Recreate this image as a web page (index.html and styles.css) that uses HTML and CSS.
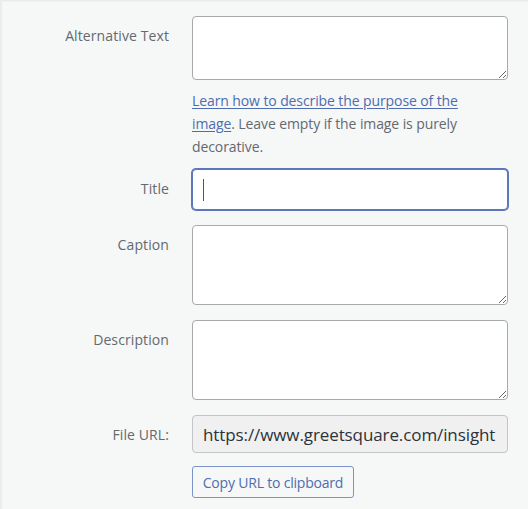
FILE: index.html
```html
<!DOCTYPE html>
<html lang="en">
<head>
<meta charset="utf-8">
<title>Attachment details</title>
<link rel="stylesheet" href="styles.css">
</head>
<body>
<div class="panel">
  <form class="details">
    <label class="label label-alt" for="alt">Alternative Text</label>
    <div class="field">
      <textarea id="alt" class="area area-alt"></textarea>
      <p class="help"><a href="#" class="help-link">Learn how to describe the purpose of the image</a>. Leave empty if the image is purely decorative.</p>
    </div>

    <label class="label label-title" for="title">Title</label>
    <div class="field">
      <div class="focus-wrap">
        <input id="title" class="text focused" type="text" value="">
        <span class="caret"></span>
      </div>
    </div>

    <label class="label" for="caption">Caption</label>
    <div class="field">
      <textarea id="caption" class="area area-tall"></textarea>
    </div>

    <label class="label" for="desc">Description</label>
    <div class="field">
      <textarea id="desc" class="area area-tall"></textarea>
    </div>

    <label class="label label-url" for="url">File URL:</label>
    <div class="field">
      <input id="url" class="text url" type="text" readonly value="https://www.greetsquare.com/insight">
      <button type="button" class="copy">Copy URL to clipboard</button>
    </div>
  </form>
</div>
</body>
</html>
```

FILE: styles.css
```css
html, body {
  margin: 0;
  padding: 0;
  background: #f6f7f7;
}

body {
  font-family: "Open Sans", "Noto Sans", "Liberation Sans", sans-serif;
  color: #646970;
}

.panel {
  min-height: 509px;
  box-sizing: border-box;
  border-left: 2px solid #ebeced;
  box-shadow: inset 0 2px 2px -1px #e4e5e6;
  padding: 16px 20px 0 0;
}

.details {
  display: grid;
  grid-template-columns: 167px 316px;
  column-gap: 23px;
  row-gap: 15px;
  align-items: start;
}

.label {
  text-align: right;
  font-size: 14px;
  line-height: 20px;
  padding-top: 10px;
  color: #646970;
  letter-spacing: 0.1px;
}

.field {
  display: flex;
  flex-direction: column;
}

.area {
  display: block;
  box-sizing: border-box;
  width: 316px;
  margin: 0;
  border: 1px solid #a7aaad;
  border-radius: 4px;
  background: #fff;
  font: inherit;
  padding: 6px 8px;
  resize: vertical;
}

.area-alt {
  height: 64px;
}

.area-tall {
  height: 80px;
}

.help {
  margin: 9px 0 -4px;
  max-width: 290px;
  font-size: 14px;
  line-height: 23px;
  color: #646970;
  letter-spacing: -0.1px;
}

.help-link {
  color: #4d6db0;
  text-decoration: underline;
  text-underline-offset: 2px;
}

.focus-wrap {
  position: relative;
}

.text {
  display: block;
  box-sizing: border-box;
  width: 316px;
  margin: 0;
  border-radius: 4px;
  background: #fff;
  font: inherit;
  outline: none;
}

.focused {
  height: 41px;
  border: 1px solid #5a78ba;
  box-shadow: 0 0 0 1px #5a78ba;
}

.caret {
  position: absolute;
  left: 11px;
  top: 10px;
  width: 1px;
  height: 22px;
  background: #50575e;
}

.url {
  height: 38px;
  border: 1px solid #c3c4c7;
  background: #f0f0f1;
  color: #2c3338;
  font-size: 17px;
  padding: 0 10px;
  letter-spacing: -0.1px;
}

.copy {
  align-self: flex-start;
  margin-top: 13px;
  height: 32px;
  width: 162px;
  box-sizing: border-box;
  border: 1px solid #7b93c9;
  border-radius: 3px;
  background: #f6f7f7;
  color: #4d6db0;
  font: inherit;
  font-size: 14px;
  letter-spacing: -0.2px;
  padding: 0 8px;
}
```
